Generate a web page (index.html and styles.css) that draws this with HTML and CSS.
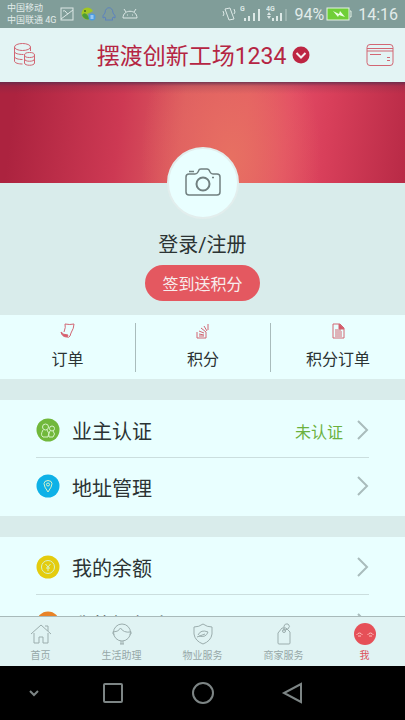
FILE: index.html
```
<!DOCTYPE html>
<html lang="zh-CN">
<head>
<meta charset="utf-8">
<meta name="viewport" content="width=device-width, initial-scale=1">
<title>我</title>
<link rel="stylesheet" href="styles.css">
</head>
<body>
<div class="status">
  <div class="carriers"><span>中国移动</span><span>中国联通 4G</span></div>
  <div class="notices">
    <svg width="14" height="14" viewBox="0 0 14 14" class="line"><rect x="1" y="1" width="12" height="12"/><path d="M1 12 13 3M3 4q2-1 3 1t2 2"/></svg>
    <svg width="16" height="14" viewBox="0 0 16 14"><path d="M13 4A6 6 0 1 0 10 12L7 7Z" fill="#a2c722"/><path d="M2 8q3-4 6 1l2 3a6 6 0 0 1-8-4" fill="#4d9b37"/><circle cx="5" cy="4" r="1" fill="#426b25"/><circle cx="12" cy="10" r="3.500" fill="#4b9ce2"/><path d="M10.500 9h3m-3 2h3" stroke="#e6f3ff"/></svg>
    <svg width="14" height="14" viewBox="0 0 14 14" fill="none" stroke="#5c82bd"><path d="M3 6C3-1 11-1 11 6q3 3 2 5l-2-1q0 1-1 2l1 1H3l1-1q-1-1-1-2l-2 1q-1-2 2-5Z"/></svg>
    <svg width="16" height="14" viewBox="0 0 16 14" class="line"><path d="M1 11C1 2 15 2 15 11ZM4 5 2 2m10 3 2-3"/><path d="M5 8h1m4 0h1"/></svg>
  </div>
  <div class="signals">
    <svg width="14" height="16" viewBox="0 0 14 16" class="line"><path d="m3 3 5-1 4 11-5 1ZM1 5l1 3-1 2m11-7 1 3-1 2"/></svg>
    <svg width="22" height="20" viewBox="0 0 22 20" fill="#dce8e6"><text x="0" y="7" class="net">G</text><path d="M4 14h2v3H4Zm4-2h2v5H8Zm5-3h2v8h-2Zm5-4h2v12h-2Z"/></svg>
    <svg width="24" height="20" viewBox="0 0 24 20" fill="#dce8e6"><text x="0" y="7" class="net">4G</text><path d="M6 14h2v3H6Zm4-2h2v5h-2Zm4-3h2v8h-2Z"/><path d="M19 5h2v12h-2Z" opacity=".3"/><path d="m1 11 2-3 2 3Zm4 1h-4l2 3Z"/></svg>
  </div>
  <span class="percent">94%</span>
  <svg width="26" height="14" viewBox="0 0 26 14"><rect x="1" y="1" width="22" height="12" fill="#70cf38" stroke="#e4f2e5"/><path d="M24 4h1v6h-1" fill="none" stroke="#e4f2e5"/><path d="m7 4 6 3 1-3 5 6-6-2-1 2Z" fill="#edffe5"/></svg>
  <time class="clock">14:16</time>
</div>

<header class="header">
  <button class="icon-button" aria-label="积分">
    <svg width="24" height="26" viewBox="0 0 24 26" class="red-line"><ellipse cx="9.500" cy="5" rx="8" ry="3.500"/><path d="M1.500 5v14c0 2 4 3 8 3M17.500 5v4M1.500 9.500c0 2 4 3 9 3M1.500 14.500c0 2 4 3 8 3"/><ellipse cx="16.500" cy="13" rx="5" ry="2.500"/><path d="M11.500 13v8c0 3 10 3 10 0v-8m-10 4c0 3 10 3 10 0"/></svg>
  </button>
  <button class="place"><span>摆渡创新工场1234</span>
    <svg width="18" height="18" viewBox="0 0 18 18"><circle cx="9" cy="9" r="8.500" fill="#bd2542"/><path d="m4.500 7 4.500 4.500L13.500 7" fill="none" stroke="#f5eef0" stroke-width="2"/></svg>
  </button>
  <button class="icon-button" aria-label="卡包">
    <svg width="28" height="24" viewBox="0 0 28 24" class="red-line"><rect x="1" y="1.500" width="26" height="21" rx="3"/><path d="M1 5.500h26M1 8h26M4 11.500h11m6 3h3m-3 3h3"/></svg>
  </button>
</header>

<main class="content">
  <div class="banner"></div>
  <section class="profile">
    <button class="avatar" aria-label="头像">
      <svg width="36" height="30" viewBox="0 0 36 30" fill="none" stroke="#718080" stroke-width="1.500"><path d="M4 6h6q2 0 3-2l1-2q0-1 2-1h6q1 0 2 1l1 2q1 2 3 2h4q3 0 3 3v15q0 3-3 3H4q-3 0-3-3V9q0-3 3-3Z"/><path d="M4 3.500h5"/><circle cx="18" cy="16" r="6.500" stroke-width="2"/><path d="M27 9.500h2"/></svg>
    </button>
    <a class="login" href="#login">登录/注册</a>
    <button class="checkin">签到送积分</button>
  </section>

  <nav class="stats" aria-label="订单与积分">
    <a href="#orders"><svg width="16" height="16" viewBox="0 0 16 16" class="red-line"><path d="M5 1q5 1 9 0 0 4-3 9l-1 3q-1 2-3 1M5 1q1 3-1 8"/><path d="M1 9q2 3 7 3l-1 2Q2 14 1 9Z" fill="#e05b6b"/></svg><span>订单</span></a>
    <a href="#points"><svg width="16" height="16" viewBox="0 0 16 16" class="red-line"><path d="M2 9v6h9V9M4 13h5M4 11l5 1M4 8l5 2M6 5l5 4M9 3l3 5M13 1v6"/></svg><span>积分</span></a>
    <a href="#point-orders"><svg width="16" height="16" viewBox="0 0 16 16" class="red-line"><path d="M3 1h7l4 4v10H3ZM5 7h6M5 9h7m-7 2h7m-7 2h7"/><path d="M9 1v5h5Z" fill="#d75667"/></svg><span>积分订单</span></a>
  </nav>

  <section class="group">
    <a class="row" href="#owner">
      <svg width="24" height="24" viewBox="0 0 24 24" class="badge"><circle cx="12" cy="12" r="11.500" fill="#71b83b" stroke="none"/><circle cx="9.500" cy="9" r="3"/><circle cx="16" cy="10.500" r="2.500"/><path d="M7 12q-3 5 0 7h5q2-4-1-7m3 1q-2 3-1 6h4q3-3 0-6"/></svg>
      <span class="name">业主认证</span><span class="state">未认证</span>
      <svg width="12" height="20" viewBox="0 0 12 20" class="arrow"><path d="m1 1 9 9-9 9"/></svg>
    </a>
    <a class="row" href="#address">
      <svg width="24" height="24" viewBox="0 0 24 24" class="badge"><circle cx="12" cy="12" r="11.500" fill="#0eb1e7" stroke="none"/><path d="M12 18q-8-11 0-11.500Q20 7 12 18Z"/><circle cx="12" cy="10.500" r="1.500"/></svg>
      <span class="name">地址管理</span>
      <svg width="12" height="20" viewBox="0 0 12 20" class="arrow"><path d="m1 1 9 9-9 9"/></svg>
    </a>
  </section>

  <section class="group">
    <a class="row" href="#balance">
      <svg width="24" height="24" viewBox="0 0 24 24" class="badge"><circle cx="12" cy="12" r="11.500" fill="#e4cc0e" stroke="none"/><circle cx="12" cy="12" r="6.500"/><path d="m9.500 9 2.500 3 2.500-3M12 12v4m-2-3h4"/></svg>
      <span class="name">我的余额</span>
      <svg width="12" height="20" viewBox="0 0 12 20" class="arrow"><path d="m1 1 9 9-9 9"/></svg>
    </a>
    <a class="row" href="#card">
      <svg width="24" height="24" viewBox="0 0 24 24" class="badge"><circle cx="12" cy="12" r="11.500" fill="#e88327" stroke="none"/></svg>
      <span class="name">我的银行卡</span>
      <svg width="12" height="20" viewBox="0 0 12 20" class="arrow"><path d="m1 1 9 9-9 9"/></svg>
    </a>
  </section>
</main>

<nav class="tabs" aria-label="主导航">
  <a href="#home"><svg width="24" height="24" viewBox="0 0 24 24"><path d="m2 12 10-9 10 9M5 11v10h5v-6h4v6h5V11M16 4h3v5"/></svg><span>首页</span></a>
  <a href="#life"><svg width="24" height="24" viewBox="0 0 24 24"><circle cx="12" cy="10.500" r="8.500"/><path d="M3.500 10q5 0 7-4 3 5 10 4M3.500 9q-2 3 1 4m16-4q2 3-1 4M11 19v3m2-3v3m-3 0h4"/></svg><span>生活助理</span></a>
  <a href="#property"><svg width="24" height="24" viewBox="0 0 24 24"><path d="M12 2q4 3 9 3v7q-1 7-9 10-8-3-9-10V5q5 0 9-3Z"/><path d="M7 13q3-6 10-3-2 6-9 4m-2 1 8-3"/></svg><span>物业服务</span></a>
  <a href="#shops"><svg width="24" height="24" viewBox="0 0 24 24"><path d="m10 6-4 5v10q0 1 1 1h10q1 0 1-1V10l-4-4ZM12 9V4q1-3 4-2 3 2 0 5l-3 1"/><circle cx="12" cy="9" r="1.500"/></svg><span>商家服务</span></a>
  <a href="#me" class="active" aria-current="page"><svg width="24" height="24" viewBox="0 0 24 24"><circle cx="12" cy="12" r="11" fill="#e65058" stroke="none"/><path d="M3.500 13q3-4 6 0m5 0q3-4 6 0M5 14h3m8 0h3" stroke="#ffc0bd"/></svg><span>我</span></a>
</nav>

<div class="system">
  <button aria-label="收起"><svg width="12" height="24" viewBox="0 0 12 24"><path d="m2 10 4 4 4-4"/></svg></button>
  <button aria-label="最近任务"><svg width="24" height="24" viewBox="0 0 24 24"><rect x="3" y="3" width="18" height="18" rx="1"/></svg></button>
  <button aria-label="主屏幕"><svg width="24" height="24" viewBox="0 0 24 24"><circle cx="12" cy="12" r="10"/></svg></button>
  <button aria-label="返回"><svg width="24" height="24" viewBox="0 0 24 24"><path d="M20 3v18L3 12Z"/></svg></button>
</div>
</body>
</html>
```
FILE: styles.css
```
* { box-sizing: border-box; }
body {
  margin: 0;
  height: 100vh;
  display: flex;
  flex-direction: column;
  background: #d9eceb;
  color: #2b3333;
  font-family: Roboto, "Noto Sans CJK SC", sans-serif;
}
a { color: inherit; text-decoration: none; }
button { padding: 0; border: 0; background: none; color: inherit; font: inherit; }
svg { display: block; flex: none; }

.status {
  flex: none;
  display: flex;
  align-items: center;
  height: 28px;
  padding: 0 7px;
  background: #809d99;
  color: #e2ecea;
}
.carriers { display: flex; flex-direction: column; width: 53px; font-size: 9px; line-height: 12px; white-space: nowrap; }
.notices { display: flex; gap: 6px; }
.signals { display: flex; align-items: center; gap: 4px; margin-left: auto; margin-right: 4px; }
.net { font-size: 7px; font-weight: 700; }
.line { fill: none; stroke: #dce8e6; }
.percent { margin-right: 2px; font-size: 16px; }
.clock { margin-left: 6px; font-size: 16px; }

.header {
  flex: none;
  display: flex;
  align-items: center;
  justify-content: space-between;
  height: 54px;
  padding: 0 11px 0 13px;
  background: #e3f4f4;
  color: #b52543;
}
.icon-button { width: 28px; }
.place { display: flex; align-items: center; gap: 6px; font-size: 23px; line-height: 32px; }
.place span { padding-top: 4px; }
.red-line { fill: none; stroke: #d26673; }

.content { flex: 1; min-height: 0; overflow: hidden; }
.banner {
  height: 101px;
  background:
    linear-gradient(#5c2c4ccc 0, #5c2c4c33 4px, #5c2c4c00 12px),
    radial-gradient(ellipse 90px 150px at 57% 75%, #e77062 0, #e7706200 100%),
    linear-gradient(97deg, #ac233f 4%, #cd3953 30%, #dc5a60 45%, #e45a64 60%, #e34b65 70%, #d83f5a 80%, #b82a46 100%);
}
.profile { display: flex; flex-direction: column; align-items: center; height: 132px; }
.avatar {
  flex: none;
  display: flex;
  align-items: center;
  justify-content: center;
  width: 72px;
  height: 72px;
  margin-top: -36px;
  border: 2px solid #e2eeed;
  border-radius: 50%;
  background: #e9ffff;
}
.login { margin-top: 12px; font-size: 20px; line-height: 28px; }
.checkin {
  width: 115px;
  height: 36px;
  margin-top: 6px;
  border-radius: 18px;
  background: #e45860;
  color: #f7eded;
  font-size: 16px;
}

.stats { display: grid; grid-template-columns: repeat(3, 1fr); height: 64px; padding: 8px 0; background: #e9ffff; }
.stats a { display: flex; flex-direction: column; align-items: center; gap: 9px; font-size: 16px; line-height: 24px; }
.stats a + a { border-left: 1px solid #a9bcbc; }

.group { margin-top: 21px; padding: 2px 36px; background: #e9ffff; }
.row { display: flex; align-items: center; height: 56px; }
.row:first-child { border-bottom: 1px solid #cbdede; }
.name { margin-left: 12px; padding-top: 2px; font-size: 20px; }
.state { margin-left: auto; margin-right: 14px; padding-top: 2px; color: #6bb13d; font-size: 16px; }
.name + .arrow { margin-left: auto; }
.badge { fill: none; stroke: #d8f3c9; }
.arrow { fill: none; stroke: #a9bcbc; stroke-width: 2; }

.tabs {
  flex: none;
  display: grid;
  grid-template-columns: repeat(5, 1fr);
  height: 50px;
  padding-top: 5px;
  border-top: 1px solid #a9baba;
  background: #e0f3f3;
  color: #96a7a7;
}
.tabs a { display: flex; flex-direction: column; align-items: center; gap: 2px; font-size: 10px; line-height: 16px; }
.tabs svg { fill: none; stroke: #9badad; }
.tabs .active { color: #dd505a; }

.system {
  flex: none;
  display: grid;
  grid-template-columns: 3fr 4fr 4fr 4fr 3fr;
  height: 54px;
  background: #000;
}
.system button { display: flex; align-items: center; justify-content: center; }
.system svg { fill: none; stroke: #7d8585; stroke-width: 2; }
```
